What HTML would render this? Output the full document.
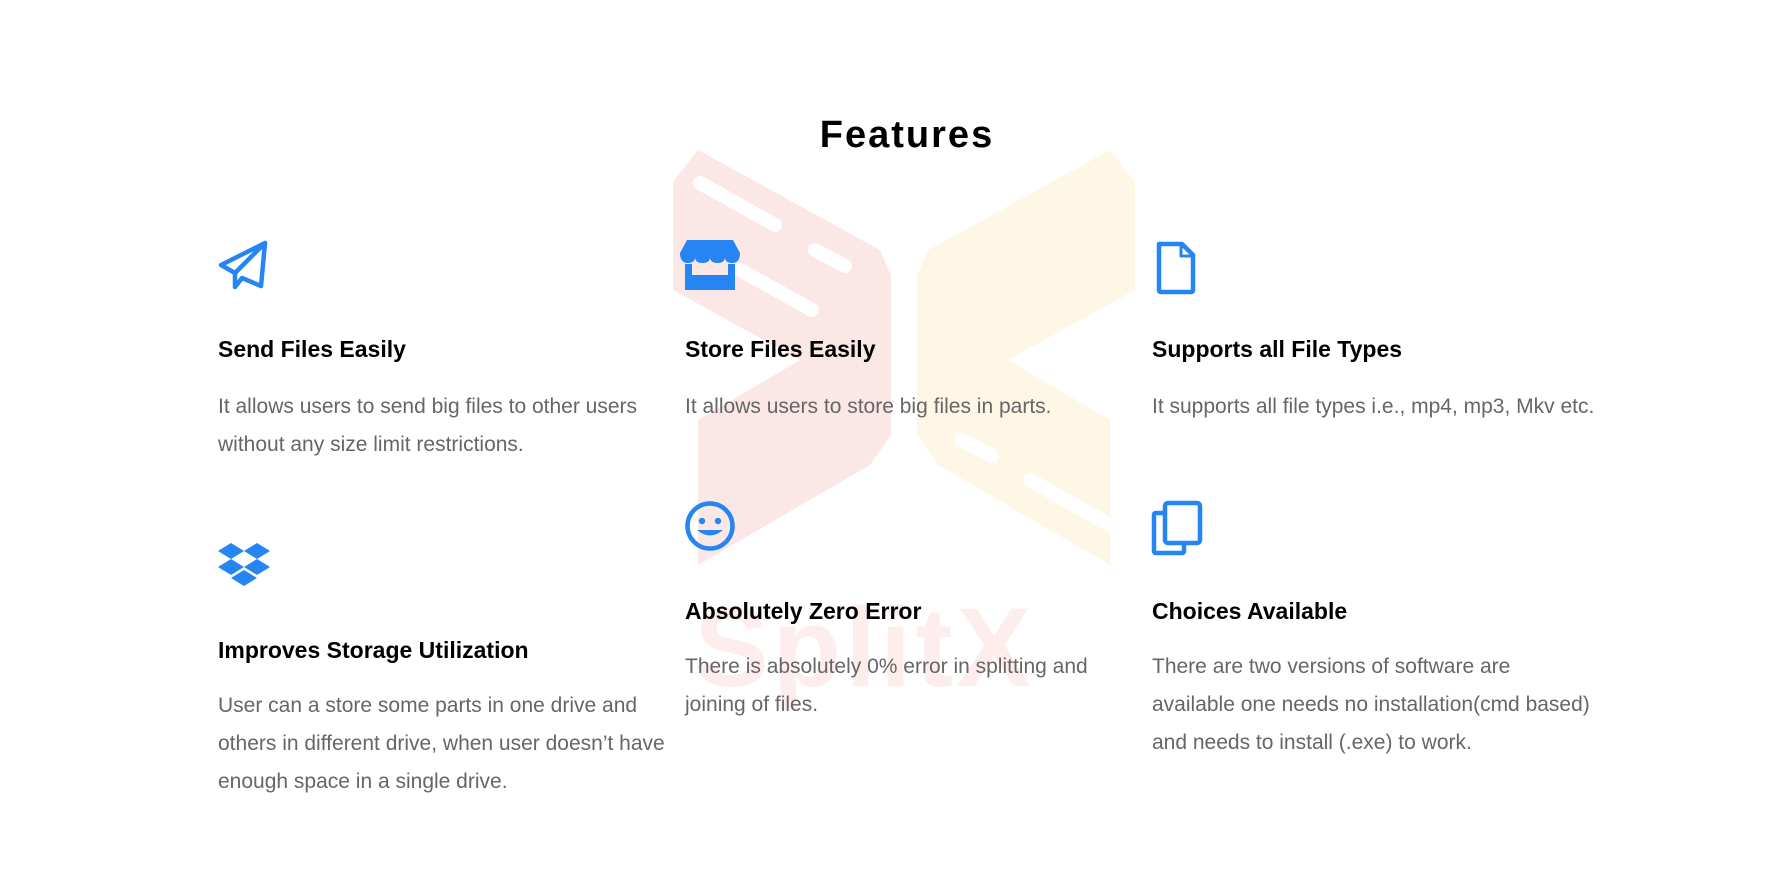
<!DOCTYPE html>
<html><head><meta charset="utf-8"><style>
html,body{margin:0;padding:0;background:#fff;width:1778px;height:880px;overflow:hidden;position:relative;font-family:"Liberation Sans",Arial,sans-serif}
.a{position:absolute;white-space:nowrap}
h2{position:absolute;margin:0;font-size:38px;font-weight:700;color:#000;left:0;width:1814px;text-align:center;top:113px;letter-spacing:2px;line-height:44px}
.h{font-size:23px;font-weight:700;color:#000;line-height:26px}
.p{font-size:21px;color:#666;line-height:38px}
svg.i{position:absolute}
</style></head><body>
<svg width="1778" height="880" style="position:absolute;left:0;top:0">
<g fill="#fce7e7">
<polygon points="698,150 880,250 891,275 891,435 870,465 698,565 698,420 800,360 673,290 673,182"/>
</g>
<g fill="#fef7e6" transform="translate(1808,0) scale(-1,1)">
<polygon points="698,150 880,250 891,275 891,435 870,465 698,565 698,420 800,360 673,290 673,182"/>
</g>
<g stroke="#fff" stroke-width="14" stroke-linecap="round">
<line x1="700" y1="183" x2="775" y2="225"/>
<line x1="815" y1="250" x2="845" y2="266"/>
<line x1="740" y1="270" x2="812" y2="310"/>
<line x1="962" y1="440" x2="992" y2="456"/>
<line x1="1030" y1="480" x2="1110" y2="525"/>
</g>
<text x="694" y="686" font-family="Liberation Sans" font-weight="700" font-size="112" fill="#fdeded" letter-spacing="4">SplitX</text>
</svg>

<h2>Features</h2>

<svg class="i" style="left:218px;top:240px" width="50" height="50" viewBox="0 0 50 50" fill="none" stroke="#2585f2" stroke-width="4.5" stroke-linejoin="round" stroke-linecap="round"><path d="M47 3 L3 25 L17 33 L17 47 L24 38 L43 46 Z"/><path d="M47 3 L17 33"/></svg>
<svg class="i" style="left:679px;top:240px" width="62" height="50" viewBox="0 0 62 50"><path fill="#2585f2" d="M8 0 H54 L61 13 Q61 23 53 23 Q46 23 46 17 Q46 23 38.5 23 Q31 23 31 17 Q31 23 23.5 23 Q16 23 16 17 Q16 23 9 23 Q1 23 1 13 Z"/><path fill="#2585f2" d="M6 24 H13 V35 H49 V24 H56 V50 H6 Z"/></svg>
<svg class="i" style="left:1155px;top:240px" width="42" height="56" viewBox="0 0 42 56" fill="none" stroke="#2585f2" stroke-width="4.5" stroke-linejoin="round"><path d="M4 4 H27 L38 15 V50 Q38 52 36 52 H6 Q4 52 4 50 Z"/><path d="M26 4 V16 H38" stroke-width="3"/></svg>
<svg class="i" style="left:218px;top:543px" width="52" height="46" viewBox="0 0 52 46" fill="#2585f2"><path d="M0 8 L13 0 L26 8 L13 16 Z M26 8 L39 0 L52 8 L39 16 Z M0 24 L13 16 L26 24 L13 32 Z M26 24 L39 16 L52 24 L39 32 Z M13 35 L26 27 L39 35 L26 43 Z"/></svg>
<svg class="i" style="left:684px;top:500px" width="52" height="52" viewBox="0 0 52 52"><circle cx="26" cy="26" r="22.5" fill="none" stroke="#2585f2" stroke-width="4.5"/><circle cx="18" cy="21" r="3.2" fill="#2585f2"/><circle cx="34" cy="21" r="3.2" fill="#2585f2"/><path d="M13 30 Q26 41 39 30 Z" fill="#2585f2"/></svg>
<svg class="i" style="left:1151px;top:500px" width="52" height="56" viewBox="0 0 52 56" fill="none" stroke="#2585f2" stroke-width="4.5" stroke-linejoin="round"><rect x="14" y="3" width="35" height="40" rx="3"/><path d="M14 13 H5 Q3 13 3 15 V51 Q3 53 5 53 H31 Q33 53 33 51 V43"/></svg>

<div class="a h" style="left:218px;top:336px">Send Files Easily</div>
<div class="a p" style="left:218px;top:388px">It allows users to send big files to other users</div>
<div class="a p" style="left:218px;top:426px">without any size limit restrictions.</div>

<div class="a h" style="left:685px;top:336px">Store Files Easily</div>
<div class="a p" style="left:685px;top:388px">It allows users to store big files in parts.</div>

<div class="a h" style="left:1152px;top:336px">Supports all File Types</div>
<div class="a p" style="left:1152px;top:388px">It supports all file types i.e., mp4, mp3, Mkv etc.</div>

<div class="a h" style="left:218px;top:637px">Improves Storage Utilization</div>
<div class="a p" style="left:218px;top:687px">User can a store some parts in one drive and</div>
<div class="a p" style="left:218px;top:725px">others in different drive, when user doesn’t have</div>
<div class="a p" style="left:218px;top:763px">enough space in a single drive.</div>

<div class="a h" style="left:685px;top:598px">Absolutely Zero Error</div>
<div class="a p" style="left:685px;top:648px">There is absolutely 0% error in splitting and</div>
<div class="a p" style="left:685px;top:686px">joining of files.</div>

<div class="a h" style="left:1152px;top:598px">Choices Available</div>
<div class="a p" style="left:1152px;top:648px">There are two versions of software are</div>
<div class="a p" style="left:1152px;top:686px">available one needs no installation(cmd based)</div>
<div class="a p" style="left:1152px;top:724px">and needs to install (.exe) to work.</div>
</body></html>
